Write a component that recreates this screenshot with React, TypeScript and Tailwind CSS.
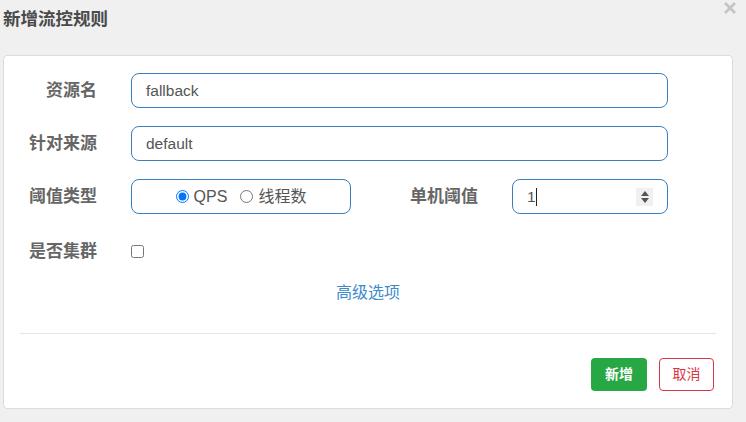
import React from 'react';

const font = { fontFamily: '"Liberation Sans", "Noto Sans CJK SC", sans-serif' };

function Label({ children, className = '' }: { children: React.ReactNode; className?: string }) {
  return (
    <div className={`text-[17px] font-bold text-[#666] text-right leading-[35px] ${className}`}>{children}</div>
  );
}

function App() {
  return (
    <div className="w-full h-[422px] bg-[#f0f0f0] pl-[3px] overflow-hidden" style={font}>
      <div className="flex justify-between items-start h-[55px] pr-[10px]">
        <h3 className="mt-[9px] text-[17.5px] leading-[20px] font-bold text-[#4a4a4a]">新增流控规则</h3>
        <svg className="mt-[2px]" width="12" height="12" viewBox="0 0 12 12" aria-label="close">
          <path d="M1 1 L11 11 M11 1 L1 11" stroke="#c4c4c4" strokeWidth="2.6" />
        </svg>
      </div>

      <div className="w-[730px] h-[354px] bg-white border border-[#dcdcdc] rounded-[4px] pt-[17px] px-[16px] pb-[17px] flex flex-col">
        <div className="flex flex-col gap-[18px] -ml-[16px]">
          <div className="flex items-center">
            <Label className="w-[93px]">资源名</Label>
            <div className="ml-[34px] w-[537px] h-[35px] border border-[#3a7fc1] rounded-[8px] pl-[14px] flex items-center text-[15.5px] text-[#555]">
              fallback
            </div>
          </div>
          <div className="flex items-center">
            <Label className="w-[93px]">针对来源</Label>
            <div className="ml-[34px] w-[537px] h-[35px] border border-[#3a7fc1] rounded-[8px] pl-[14px] flex items-center text-[15.5px] text-[#555]">
              default
            </div>
          </div>
          <div className="flex items-center">
            <Label className="w-[93px]">阈值类型</Label>
            <div className="ml-[34px] w-[220px] h-[35px] border border-[#3a7fc1] rounded-[8px] flex items-center justify-center gap-[13px] text-[16px] text-[#555]">
              <label className="flex items-center gap-[5px]">
                <input type="radio" name="grade" defaultChecked className="w-[13px] h-[13px] m-0" />
                QPS
              </label>
              <label className="flex items-center gap-[5px]">
                <input type="radio" name="grade" className="w-[13px] h-[13px] m-0" />
                线程数
              </label>
            </div>
            <Label className="w-[127px]">单机阈值</Label>
            <div className="ml-[34px] w-[156px] h-[35px] border border-[#3a7fc1] rounded-[8px] pl-[14px] pr-[14px] flex items-center text-[15.5px] text-[#555]">
              <span>1</span>
              <span className="w-[1px] h-[18px] bg-[#222]"></span>
              <span className="ml-auto w-[17px] h-[18px] bg-[#f0f0f0] flex flex-col items-center justify-center gap-[2px]">
                <svg width="8" height="5" viewBox="0 0 8 5"><path d="M0 5 L4 0 L8 5 Z" fill="#555" /></svg>
                <svg width="8" height="5" viewBox="0 0 8 5"><path d="M0 0 L4 5 L8 0 Z" fill="#555" /></svg>
              </span>
            </div>
          </div>
          <div className="flex items-center mt-[2px]">
            <Label className="w-[93px]">是否集群</Label>
            <input type="checkbox" className="ml-[34px] w-[13px] h-[13px] m-0" />
          </div>
        </div>

        <div className="mt-[14px] text-center text-[16px] leading-[20px] text-[#3d8bcd]">高级选项</div>

        <div className="mt-[30px] border-t border-[#e5e5e5]"></div>

        <div className="mt-[24px] flex justify-end gap-[12px] pr-[2px]">
          <button className="w-[56px] h-[33px] rounded-[4px] bg-[#28a745] text-white text-[14px] font-bold">新增</button>
          <button className="w-[55px] h-[33px] rounded-[4px] border border-[#dc3545] text-[#dc3545] text-[14px]">取消</button>
        </div>
      </div>
    </div>
  );
}

export default App;
